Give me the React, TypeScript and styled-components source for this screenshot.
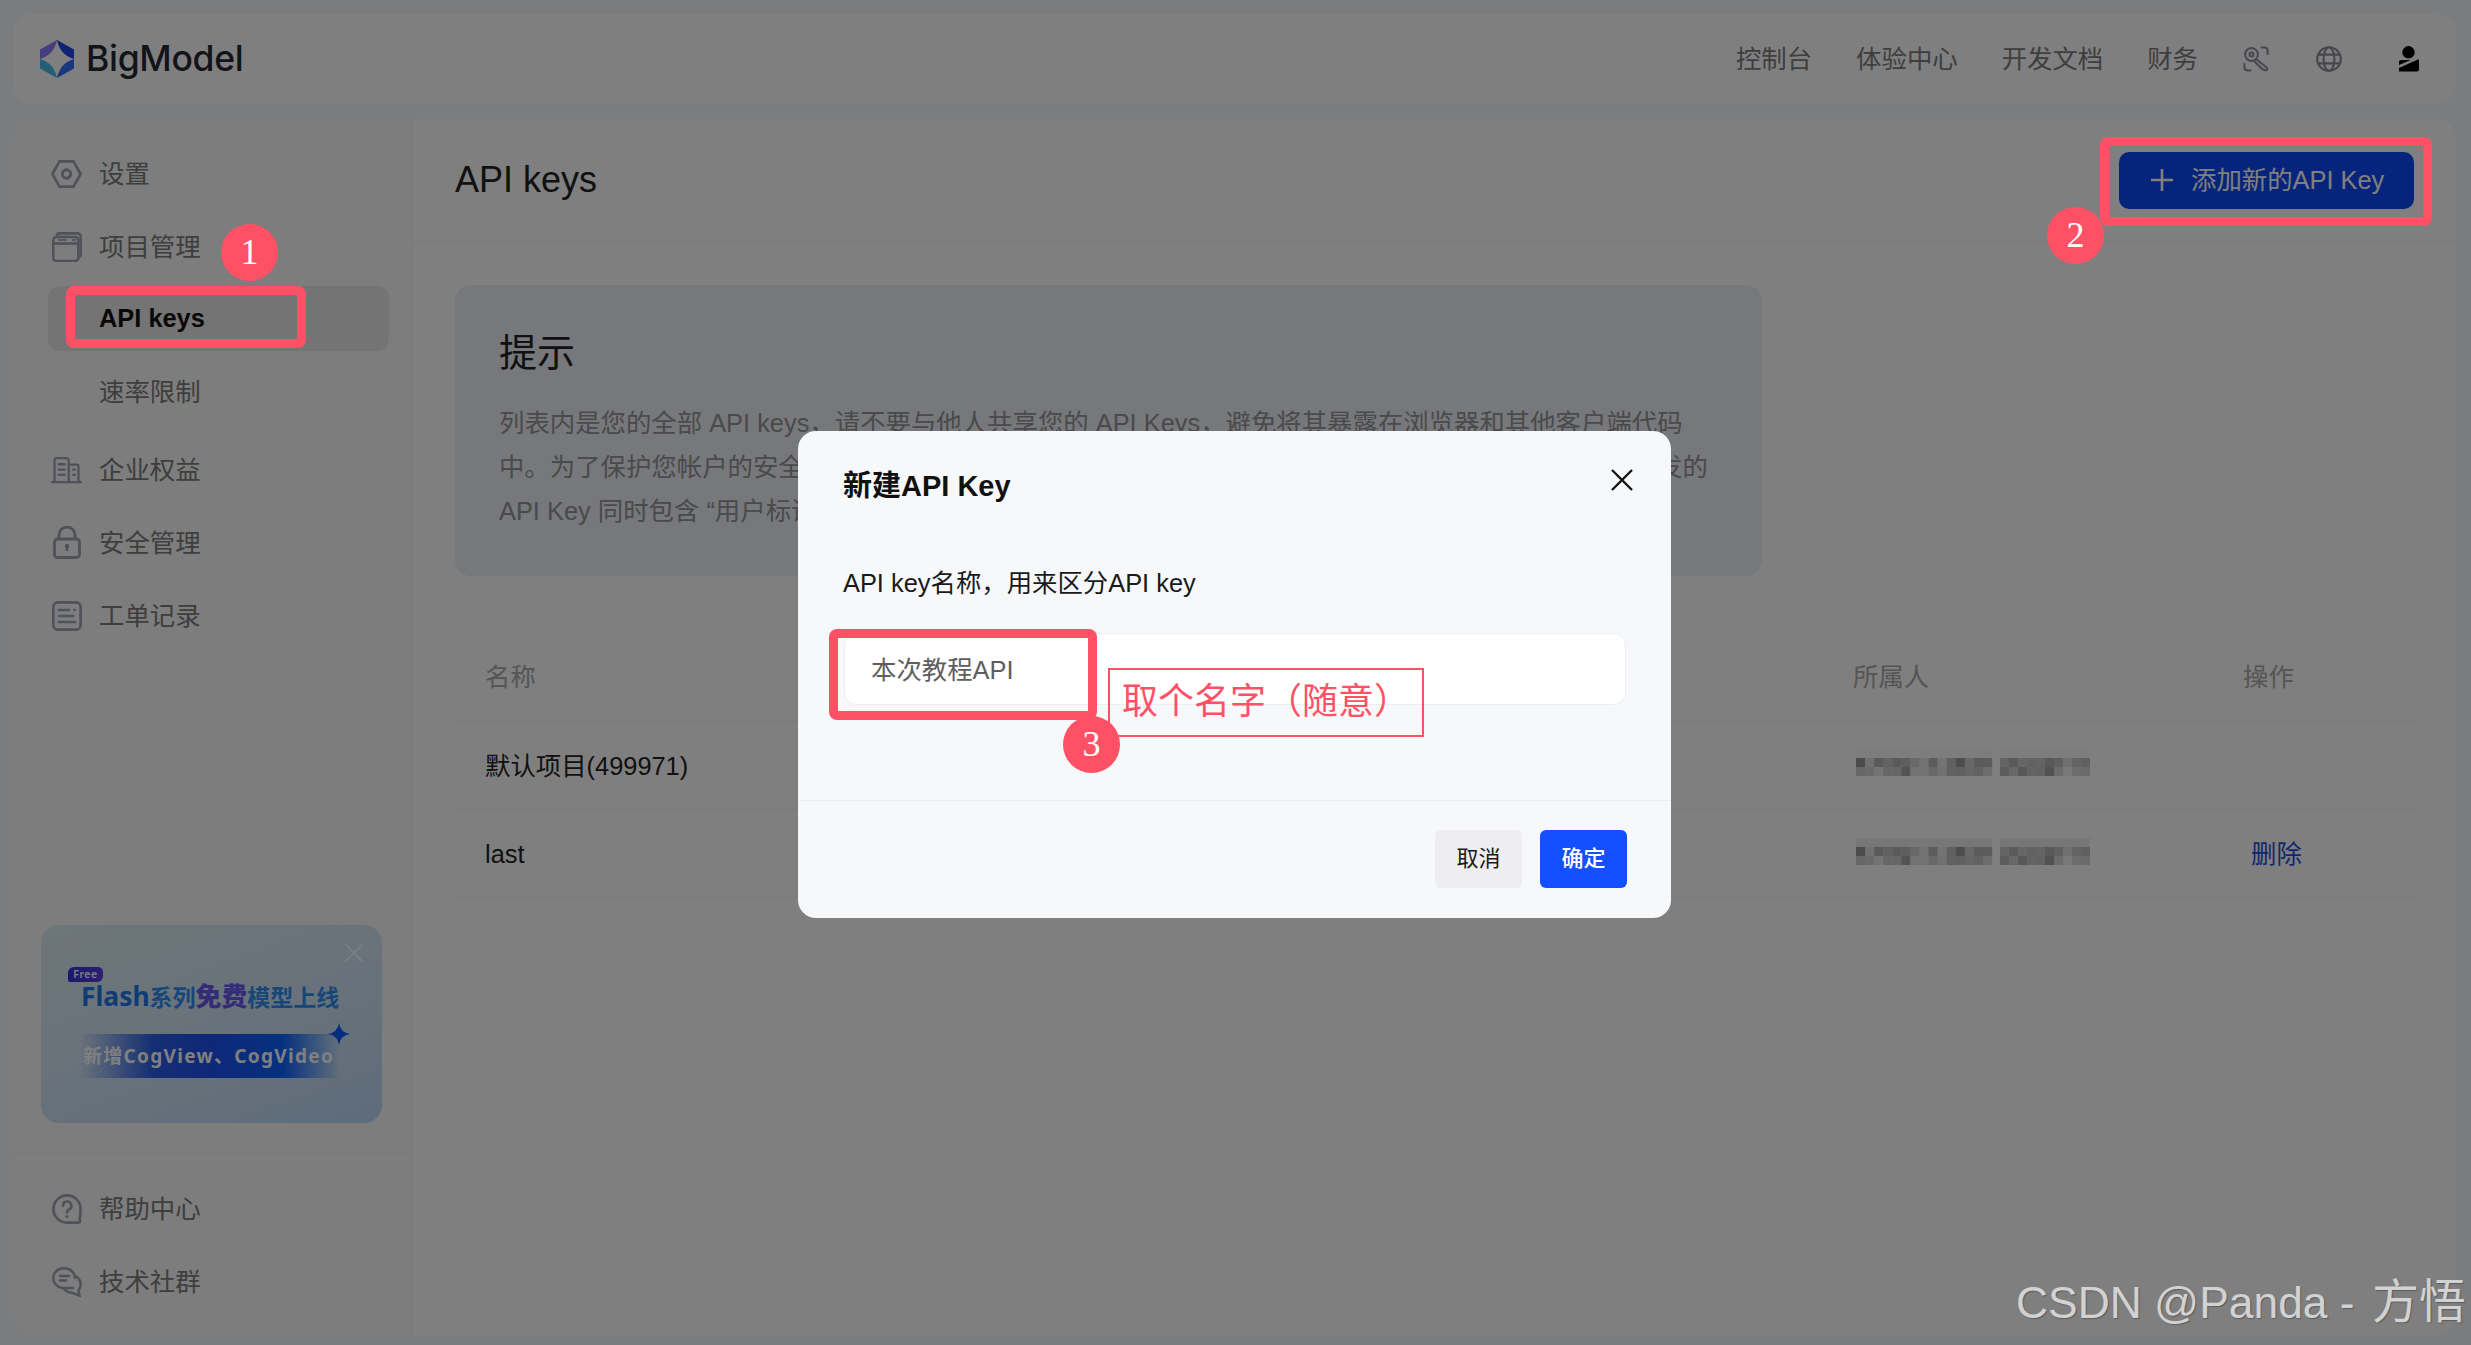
import React from "react";
import styled, { createGlobalStyle } from "styled-components";

const SANS = `"Liberation Sans", "Noto Sans CJK SC", sans-serif`;

const Global = createGlobalStyle`
  html, body { margin: 0; padding: 0; background: #f6f8fc; }
  body { font-family: ${SANS}; }
  * { box-sizing: border-box; }
`;

const Page = styled.div`
  position: relative;
  width: 2471px;
  height: 1345px;
  overflow: hidden;
  background: #f6f8fc;
  padding: 14px 15px 10px 13px;
  display: flex;
  flex-direction: column;
  gap: 15px;
  font-family: ${SANS};
  font-size: 25.4px;
  line-height: 40px;
`;

/* ---------- top bar ---------- */
const Header = styled.header`
  height: 90px;
  flex: none;
  background: #fff;
  border-radius: 20px;
  display: flex;
  align-items: center;
  justify-content: space-between;
  padding: 0 37px 0 27px;
`;
const Brand = styled.div`
  display: flex;
  align-items: center;
  gap: 12px;
`;
const BrandName = styled.span`
  font-family: Inter, ${SANS};
  font-size: 35.5px;
  font-weight: 500;
  letter-spacing: -0.3px;
  color: #242834;
`;
const Nav = styled.nav`
  display: flex;
  align-items: center;
  gap: 44px;
`;
const NavLink = styled.span`
  color: #7c7c7c;
`;
const NavIcon = styled.span<{ $gap: number }>`
  display: flex;
  margin-left: ${(p) => p.$gap}px;
`;

/* ---------- body ---------- */
const Body = styled.div`
  flex: 1;
  display: flex;
  min-height: 0;
`;
const Sidebar = styled.aside`
  width: 400px;
  flex: none;
  background: #f8faf8;
  border-right: 1px solid #f2f2f2;
  border-radius: 20px 0 0 20px;
  display: flex;
  flex-direction: column;
`;
const MenuList = styled.div`
  padding: 22px 23px 0 35px;
  display: flex;
  flex-direction: column;
  gap: 8px;
`;
const MenuRow = styled.div<{ $top?: number }>`
  height: 65px;
  flex: none;
  display: flex;
  align-items: center;
  gap: 17px;
  padding-left: 3px;
  color: #7c7c7c;
  margin-top: ${(p) => p.$top ?? 0}px;
`;
const IconBox = styled.span`
  width: 31px;
  display: flex;
  justify-content: center;
  flex: none;
`;
const SubRow = styled.div<{ $active?: boolean }>`
  height: 65px;
  flex: none;
  display: flex;
  align-items: center;
  padding: 0 0 ${(p) => (p.$active ? 2 : 0)}px 51px;
  margin-top: ${(p) => (p.$active ? -1 : 0)}px;
  border-radius: 12px;
  background: ${(p) => (p.$active ? "#e8e8e8" : "transparent")};
  color: ${(p) => (p.$active ? "#111" : "#7c7c7c")};
  font-weight: ${(p) => (p.$active ? 700 : 400)};
`;

const Promo = styled.div`
  position: relative;
  margin: auto 30px 0 28px;
  height: 198px;
  flex: none;
  border-radius: 18px;
  background: linear-gradient(160deg, #dcecf4 0%, #d4e6f4 45%, #bcd8f6 100%);
  padding: 42px 0 0 27px;
  font-family: "Noto Sans", "Noto Sans CJK SC", sans-serif;
`;
const PromoClose = styled.svg`
  position: absolute;
  top: 18px;
  right: 18px;
`;
const FreeTag = styled.div`
  width: 35px;
  height: 15px;
  background: linear-gradient(90deg, #3a30d8, #5a3ee0);
  border-radius: 6px 5px 6px 2px;
  color: #fff;
  font-size: 10.5px;
  line-height: 15px;
  font-weight: 600;
  text-align: center;
  letter-spacing: 0.6px;
`;
const PromoTitle = styled.div`
  margin: -2px 0 0 13px;
  font-size: 23px;
  line-height: 32px;
  font-weight: 600;
  color: #2f8cf0;
  white-space: nowrap;
`;
const PromoFlash = styled.span`
  font-size: 26.4px;
  font-weight: 700;
  color: #1e78e8;
`;
const PromoHot = styled.span`
  font-size: 25.8px;
  font-weight: 800;
  color: #6a58f0;
`;
const PromoBand = styled.div`
  position: relative;
  margin: 21px 0 0 12px;
  width: 260px;
  height: 44px;
  background: linear-gradient(
    90deg,
    rgba(30, 94, 255, 0) 0%,
    #2a5ee8 28%,
    #1e50f0 50%,
    #0a62ff 78%,
    rgba(30, 94, 255, 0) 100%
  );
  color: #fff;
  font-size: 19px;
  font-weight: 700;
  line-height: 44px;
  padding: 0 0 0 3px;
  letter-spacing: 1.3px;
  white-space: nowrap;
`;
const Spark = styled.svg`
  position: absolute;
  top: -11px;
  right: -10px;
`;

const SideFooter = styled.div`
  margin-top: 30px;
  border-top: 1px solid #f2f2f2;
  padding: 22px 23px 21px 35px;
  display: flex;
  flex-direction: column;
  gap: 8px;
`;

/* ---------- main ---------- */
const Main = styled.main`
  flex: 1;
  min-width: 0;
  background: #fff;
  border-radius: 0 20px 20px 0;
  display: flex;
  flex-direction: column;
`;
const TitleBar = styled.div`
  height: 123px;
  flex: none;
  border-bottom: 1px solid #f2f2f2;
  display: flex;
  align-items: center;
  justify-content: space-between;
  padding: 0 42px;
`;
const PageTitle = styled.h1`
  margin: 0;
  font-size: 36px;
  line-height: 48px;
  font-weight: 400;
  color: #222;
`;
const AddButton = styled.button`
  width: 295px;
  height: 57px;
  border: 0;
  border-radius: 10px;
  background: #0e48fa;
  color: #fff;
  font: inherit;
  display: flex;
  align-items: center;
  gap: 18px;
  padding: 0 0 0 32px;
`;
const TipCard = styled.section`
  margin: 43px 0 0 42px;
  width: 1307px;
  height: 291px;
  flex: none;
  border-radius: 16px;
  background: #eef0f8;
  padding: 44px 44px 0;
`;
const TipTitle = styled.h2`
  margin: 0 0 24px;
  font-size: 38px;
  line-height: 48px;
  font-weight: 400;
  color: #222;
`;
const TipLine = styled.div`
  line-height: 44px;
  color: #949494;
  white-space: nowrap;
`;

const Table = styled.div`
  margin: 56px 0 0 42px;
  width: 1960px;
`;
const TableRow = styled.div<{ $head?: boolean }>`
  height: ${(p) => (p.$head ? 90 : 88)}px;
  display: grid;
  grid-template-columns: 1398px 390px 1fr;
  align-items: center;
  border-bottom: 1px solid #f2f2f2;
  color: ${(p) => (p.$head ? "#aaa" : "#222")};
`;
const NameCell = styled.div`
  padding-left: 30px;
`;
const DeleteLink = styled.span`
  margin-left: 8px;
  color: #1e4fe0;
`;
const MosaicBox = styled.svg<{ $lift: number }>`
  display: block;
  margin: 0 0 ${(p) => p.$lift}px 3px;
`;

/* ---------- dialog ---------- */
const Overlay = styled.div`
  position: absolute;
  inset: 0;
  background: rgba(0, 0, 0, 0.5);
`;
const Dialog = styled.div`
  position: absolute;
  left: 798px;
  top: 431px;
  width: 873px;
  height: 487px;
  background: #f7f8fa;
  border-radius: 18px;
  display: flex;
  flex-direction: column;
`;
const DialogHead = styled.div`
  height: 132px;
  flex: none;
  display: flex;
  align-items: flex-start;
  justify-content: space-between;
  padding: 35px 38px 0 45px;
`;
const DialogTitle = styled.div`
  font-size: 29px;
  line-height: 40px;
  font-weight: 700;
  color: #111;
`;
const CloseIcon = styled.svg`
  margin-top: 3px;
`;
const DialogBody = styled.div`
  flex: 1;
  padding: 0 45px 0 46px;
`;
const FieldLabel = styled.div`
  margin: 0 0 30px -1px;
  color: #1a1a1a;
`;
const NameInput = styled.input`
  display: block;
  width: 782px;
  height: 72px;
  border: 1px solid #eeeef0;
  border-radius: 12px;
  background: #fff;
  padding: 0 0 2px 26px;
  font: inherit;
  color: #5e5e5e;
  outline: none;
`;
const DialogFoot = styled.div`
  height: 118px;
  flex: none;
  border-top: 1px solid #eceef3;
  display: flex;
  justify-content: flex-end;
  gap: 18px;
  padding: 29px 44px 0 0;
`;
const FootButton = styled.button<{ $primary?: boolean }>`
  width: 87px;
  height: 58px;
  border: 0;
  border-radius: 6px;
  background: ${(p) => (p.$primary ? "#1450ff" : "#eeeef1")};
  color: ${(p) => (p.$primary ? "#fff" : "#1a1a1a")};
  font: inherit;
  font-size: 22px;
  font-weight: ${(p) => (p.$primary ? 500 : 400)};
`;

/* ---------- annotations drawn over the page ---------- */
const RED = "#ff5165";
const Callout = styled.div<{ $x: number; $y: number; $w: number; $h: number }>`
  position: absolute;
  left: ${(p) => p.$x}px;
  top: ${(p) => p.$y}px;
  width: ${(p) => p.$w}px;
  height: ${(p) => p.$h}px;
  border: 9px solid ${RED};
  border-radius: 8px;
`;
const Badge = styled.div<{ $x: number; $y: number }>`
  position: absolute;
  left: ${(p) => p.$x - 28}px;
  top: ${(p) => p.$y - 28}px;
  width: 57px;
  height: 57px;
  border-radius: 50%;
  background: ${RED};
  color: #fff;
  font-family: "Liberation Serif", serif;
  font-size: 36px;
  line-height: 57px;
  text-align: center;
`;
const NoteBox = styled.div`
  position: absolute;
  left: 1108px;
  top: 668px;
  width: 316px;
  height: 69px;
  border: 2px solid ${RED};
  padding-left: 12px;
  color: ${RED};
  font-size: 36px;
  line-height: 64px;
  white-space: nowrap;
`;
const Watermark = styled.div`
  position: absolute;
  left: 2016px;
  top: 1273px;
  font-size: 44.4px;
  line-height: 58px;
  color: #d2d2d2;
  text-shadow: 1px 1px 1px #5c5c5c;
  white-space: nowrap;
`;
const WatermarkName = styled.span`
  margin-left: 5px;
  font-size: 47px;
`;

/* ---------- icons ---------- */
const GREY = "#a1a4b5";

const LogoMark = () => (
  <svg width="34" height="38" viewBox="0 0 34 38">
    <defs>
      <clipPath id="hex">
        <polygon points="17,0 34,9.5 34,28.5 17,38 0,28.5 0,9.5" />
      </clipPath>
    </defs>
    <g clipPath="url(#hex)">
      <rect x="0" y="0" width="17" height="19" fill="#8c7bfa" />
      <rect x="17" y="0" width="17" height="19" fill="#2044e8" />
      <rect x="0" y="19" width="17" height="19" fill="#46c0f0" />
      <rect x="17" y="19" width="17" height="19" fill="#3470ff" />
    </g>
    <path d="M17 0 Q20 15 34 19 Q20 23 17 38 Q14 23 0 19 Q14 15 17 0Z" fill="#fff" />
  </svg>
);
const SettingsIcon = () => (
  <svg width="33" height="30" viewBox="0 0 33 30" fill="none" stroke={GREY} strokeWidth="2.8" strokeLinejoin="round">
    <polygon points="9,1.5 24,1.5 31.5,15 24,28.5 9,28.5 1.5,15" />
    <circle cx="16.5" cy="15" r="4.4" strokeWidth="3.2" />
  </svg>
);
const ProjectIcon = () => (
  <svg width="30" height="30" viewBox="0 0 30 30" fill="none" stroke={GREY} strokeWidth="2.6">
    <rect x="1.3" y="5" width="25" height="24" rx="3" />
    <path d="M5 4.5V3.4A2 2 0 0 1 7 1.4H25.5A3 3 0 0 1 28.7 4.4V22A3 3 0 0 1 26.5 25" />
    <path d="M1.5 11.5H26.5" />
    <path d="M6 8H15" strokeWidth="1.6" />
    <path d="M20 8H24" strokeWidth="1.6" />
  </svg>
);
const BuildingIcon = () => (
  <svg width="35" height="30" viewBox="0 0 35 30" fill="none" stroke={GREY} strokeWidth="2.6" strokeLinecap="round">
    <path d="M4 28V4Q4 1.5 6.5 1.5H17Q20 1.5 20 4.5V28" />
    <path d="M20 9H29Q31 9 31 11V28" />
    <path d="M1.2 28.6H33.8" />
    <path d="M8.5 8.5H15.5M8.5 14.5H15.5M8.5 20.5H15.5M25 14.5H27M25 20.5H27" />
  </svg>
);
const LockIcon = () => (
  <svg width="28" height="33" viewBox="0 0 28 33" fill="none" stroke={GREY} strokeWidth="2.8">
    <rect x="1.5" y="13" width="25" height="18.5" rx="3" />
    <path d="M6 13V9A8 8 0 0 1 22 9V13" />
    <circle cx="14" cy="20" r="2.2" fill={GREY} stroke="none" />
    <path d="M14 20V25" strokeWidth="2.4" />
  </svg>
);
const TicketIcon = () => (
  <svg width="30" height="30" viewBox="0 0 30 30" fill="none" stroke={GREY} strokeWidth="2.7" strokeLinecap="round">
    <rect x="1.3" y="1.3" width="27.4" height="27.4" rx="5" />
    <path d="M7 9H17M7 15H21M7 21H23" />
    <circle cx="22.5" cy="9" r="1.3" fill={GREY} stroke="none" />
  </svg>
);
const HelpIcon = () => (
  <svg width="30" height="30" viewBox="0 0 30 30" fill="none" stroke={GREY} strokeWidth="2.6" strokeLinecap="round">
    <path d="M28.6 15A13.6 13.6 0 1 0 15 28.6H26.5Q28.8 28.6 27.6 25.5Q28.6 21 28.6 15Z" />
    <path d="M11 11.7A4.2 4.2 0 1 1 17.2 15.4Q15 16.6 15 18.5" />
    <circle cx="15" cy="22.4" r="1.5" fill={GREY} stroke="none" />
  </svg>
);
const CommunityIcon = () => (
  <svg width="30" height="30" viewBox="0 0 30 30" fill="none" stroke={GREY} strokeWidth="2.5" strokeLinecap="round">
    <path d="M23 11C23 5.5 18 1.3 12 1.3S1.2 5.5 1.2 11C1.2 16 5 20 10 21H21" />
    <path d="M8 9H17M8 13.5H14" />
    <path d="M24.5 9.5C27 11.5 28.6 14.2 28.6 17.5C28.6 19.8 27.6 22 26.5 23.5L27.6 28.6L21 26C17 25.8 14.5 24.6 12.5 22.6" />
  </svg>
);
const KeyIcon = () => (
  <svg width="26" height="26" viewBox="0 0 26 26" fill="none" stroke="#8c8e9c" strokeWidth="2" strokeLinecap="round" strokeLinejoin="round">
    <circle cx="8.5" cy="8.5" r="6.4" />
    <circle cx="8.5" cy="8.5" r="2" />
    <path d="M13 13L24 21.8Q25 24.2 22.4 24.2L19.8 23.4L12 16" />
    <path d="M18.5 1.4H21.5Q24.6 1.4 24.6 4.4V8" />
    <path d="M1.4 18V21Q1.4 24.4 4.6 24.4H7.5" />
  </svg>
);
const GlobeIcon = () => (
  <svg width="26" height="26" viewBox="0 0 26 26" fill="none" stroke="#8c8e9c" strokeWidth="2.1">
    <circle cx="13" cy="13" r="11.8" />
    <ellipse cx="13" cy="13" rx="5.4" ry="11.8" />
    <path d="M2.6 8.6H23.4M2.6 17.4H23.4" />
  </svg>
);
const UserIcon = () => (
  <svg width="21" height="26" viewBox="0 0 21 26" fill="#000">
    <circle cx="10.5" cy="6.3" r="6.2" />
    <path d="M1 19V16Q1 14 3 14H12.6Z" />
    <path d="M1 22L20.4 13.2Q21 13.8 21 15.5V23.5Q21 25.6 19 25.6H1Z" />
  </svg>
);
const PlusIcon = () => (
  <svg width="22" height="22" viewBox="0 0 22 22" fill="none" stroke="#fff" strokeWidth="2.6">
    <path d="M11 0V22M0 11H22" />
  </svg>
);

/* the masked e-mail address: values are the tones seen through the dialog's dim layer */
const MID =
  "4b 70 5a 62 5a 5e 68 72 5c 74 60 4d 68 5b 5c . 64 5a 66 62 64 59 60 70 64 60".split(" ");
const LOW =
  "66 6a 74 66 66 54 72 72 68 70 62 60 66 62 6c . 5c 68 58 64 62 52 6a 78 6c 6a".split(" ");

const Mosaic = ({ lift, top }: { lift: number; top: string }) => {
  const tone = (hex: string) => {
    const v = Math.min(255, parseInt(hex, 16) * 2);
    return `rgb(${v},${v},${v})`;
  };
  const cell = (vals: string[], y: number, key: string) =>
    vals.map((val, i) => {
      if (val === ".") return null;
      const x = i < 15 ? i * 9.07 : 144 + (i - 16) * 9;
      return <rect key={key + i} x={x} y={y} width={9.2} height={9} fill={tone(val)} />;
    });
  const faint = MID.map((v) => (v === "." ? v : top));
  return (
    <MosaicBox $lift={lift} width="234" height="27" viewBox="0 0 234 27">
      {cell(faint, 0, "a")}
      {cell(MID, 9, "b")}
      {cell(LOW, 18, "c")}
    </MosaicBox>
  );
};

export default function App() {
  return (
    <>
      <Global />
      <Page>
        <Header>
          <Brand>
            <LogoMark />
            <BrandName>BigModel</BrandName>
          </Brand>
          <Nav>
            <NavLink>控制台</NavLink>
            <NavLink>体验中心</NavLink>
            <NavLink>开发文档</NavLink>
            <NavLink>财务</NavLink>
            <NavIcon $gap={1}><KeyIcon /></NavIcon>
            <NavIcon $gap={3}><GlobeIcon /></NavIcon>
            <NavIcon $gap={12}><UserIcon /></NavIcon>
          </Nav>
        </Header>
        <Body>
          <Sidebar>
            <MenuList>
              <MenuRow><IconBox><SettingsIcon /></IconBox>设置</MenuRow>
              <MenuRow><IconBox><ProjectIcon /></IconBox>项目管理</MenuRow>
              <SubRow $active>API keys</SubRow>
              <SubRow>速率限制</SubRow>
              <MenuRow $top={5}><IconBox><BuildingIcon /></IconBox>企业权益</MenuRow>
              <MenuRow><IconBox><LockIcon /></IconBox>安全管理</MenuRow>
              <MenuRow><IconBox><TicketIcon /></IconBox>工单记录</MenuRow>
            </MenuList>
            <Promo>
              <PromoClose width="20" height="20" viewBox="0 0 22 22" fill="none" stroke="#fff" strokeWidth="1.6">
                <path d="M1 1L21 21M21 1L1 21" />
              </PromoClose>
              <FreeTag>Free</FreeTag>
              <PromoTitle>
                <PromoFlash>Flash</PromoFlash>系列<PromoHot>免费</PromoHot>模型上线
              </PromoTitle>
              <PromoBand>
                新增CogView、CogVideo
                <Spark width="22" height="22" viewBox="0 0 22 22">
                  <path d="M11 0Q12.5 9.5 22 11Q12.5 12.5 11 22Q9.5 12.5 0 11Q9.5 9.5 11 0Z" fill="#0a5cff" />
                </Spark>
              </PromoBand>
            </Promo>
            <SideFooter>
              <MenuRow><IconBox><HelpIcon /></IconBox>帮助中心</MenuRow>
              <MenuRow><IconBox><CommunityIcon /></IconBox>技术社群</MenuRow>
            </SideFooter>
          </Sidebar>
          <Main>
            <TitleBar>
              <PageTitle>API keys</PageTitle>
              <AddButton><PlusIcon />添加新的API Key</AddButton>
            </TitleBar>
            <TipCard>
              <TipTitle>提示</TipTitle>
              <TipLine>列表内是您的全部 API keys，请不要与他人共享您的 API Keys，避免将其暴露在浏览器和其他客户端代码</TipLine>
              <TipLine>中。为了保护您帐户的安全，我们还可能会自动更换我们发现已公开泄露的API密钥信息。目前平台新开发的</TipLine>
              <TipLine>API Key 同时包含 “用户标识 id” 和 “签名密钥 secret”，格式为 {"{id}.{secret}"}。</TipLine>
            </TipCard>
            <Table>
              <TableRow $head>
                <NameCell>名称</NameCell>
                <div>所属人</div>
                <div>操作</div>
              </TableRow>
              <TableRow>
                <NameCell>默认项目(499971)</NameCell>
                <Mosaic lift={7} top="7d" />
                <div />
              </TableRow>
              <TableRow>
                <NameCell>last</NameCell>
                <Mosaic lift={5} top="77" />
                <DeleteLink>删除</DeleteLink>
              </TableRow>
            </Table>
          </Main>
        </Body>

        <Overlay />
        <Dialog>
          <DialogHead>
            <DialogTitle>新建API Key</DialogTitle>
            <CloseIcon width="22" height="22" viewBox="0 0 22 22" fill="none" stroke="#111" strokeWidth="2.4">
              <path d="M1 1L21 21M21 1L1 21" />
            </CloseIcon>
          </DialogHead>
          <DialogBody>
            <FieldLabel>API key名称，用来区分API key</FieldLabel>
            <NameInput readOnly value="本次教程API" />
          </DialogBody>
          <DialogFoot>
            <FootButton>取消</FootButton>
            <FootButton $primary>确定</FootButton>
          </DialogFoot>
        </Dialog>

        <Callout $x={66} $y={286} $w={240} $h={62} />
        <Badge $x={249} $y={252}>1</Badge>
        <Callout $x={2100} $y={137} $w={332} $h={89} />
        <Badge $x={2075} $y={235}>2</Badge>
        <Callout $x={829} $y={629} $w={268} $h={91} />
        <NoteBox>取个名字（随意）</NoteBox>
        <Badge $x={1091} $y={744}>3</Badge>
        <Watermark>CSDN @Panda - <WatermarkName>方悟</WatermarkName></Watermark>
      </Page>
    </>
  );
}
